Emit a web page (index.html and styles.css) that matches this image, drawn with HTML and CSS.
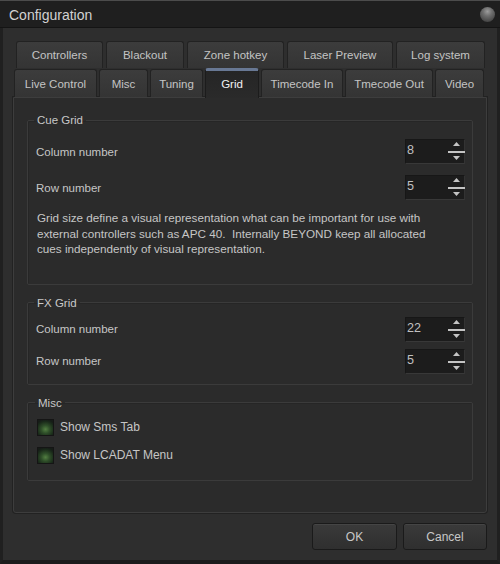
FILE: index.html
```
<!DOCTYPE html>
<html>
<head>
<meta charset="utf-8">
<title>Configuration</title>
<link rel="stylesheet" href="styles.css">
</head>
<body>
<div class="window">
  <div class="titlebar">
    <span class="title">Configuration</span>
    <span class="knob"></span>
  </div>
  <div class="client">
    <div class="tabs">
      <div class="tabrow row1">
        <div class="tab w-controllers">Controllers</div>
        <div class="tab w-blackout">Blackout</div>
        <div class="tab w-zone">Zone hotkey</div>
        <div class="tab w-laser">Laser Preview</div>
        <div class="tab w-log">Log system</div>
      </div>
      <div class="tabrow row2">
        <div class="tab w-live">Live Control</div>
        <div class="tab w-misc">Misc</div>
        <div class="tab w-tuning">Tuning</div>
        <div class="tab w-grid selected">Grid</div>
        <div class="tab w-tcin">Timecode In</div>
        <div class="tab w-tcout">Tmecode Out</div>
        <div class="tab w-video">Video</div>
      </div>
    </div>
    <div class="panel">
      <fieldset class="group cue">
        <legend>Cue Grid</legend>
        <div class="row">
          <span class="label">Column number</span>
          <div class="spin"><span class="val">8</span><svg class="arrows" width="17" height="25" viewBox="0 0 17 25"><path d="M8.5 3 L12 7 L5 7 Z" fill="#c4c4c4"/><rect x="0" y="12" width="17" height="2" fill="#c4c4c4"/><path d="M5 17 L12 17 L8.5 21 Z" fill="#c4c4c4"/></svg></div>
        </div>
        <div class="row">
          <span class="label">Row number</span>
          <div class="spin"><span class="val">5</span><svg class="arrows" width="17" height="25" viewBox="0 0 17 25"><path d="M8.5 3 L12 7 L5 7 Z" fill="#c4c4c4"/><rect x="0" y="12" width="17" height="2" fill="#c4c4c4"/><path d="M5 17 L12 17 L8.5 21 Z" fill="#c4c4c4"/></svg></div>
        </div>
        <p class="desc">Grid size define a visual representation what can be important for use with external controllers such as APC 40.&nbsp; Internally BEYOND keep all allocated cues independently of visual representation.</p>
      </fieldset>
      <fieldset class="group fx">
        <legend>FX Grid</legend>
        <div class="row">
          <span class="label">Column number</span>
          <div class="spin"><span class="val">22</span><svg class="arrows" width="17" height="25" viewBox="0 0 17 25"><path d="M8.5 3 L12 7 L5 7 Z" fill="#c4c4c4"/><rect x="0" y="12" width="17" height="2" fill="#c4c4c4"/><path d="M5 17 L12 17 L8.5 21 Z" fill="#c4c4c4"/></svg></div>
        </div>
        <div class="row">
          <span class="label">Row number</span>
          <div class="spin"><span class="val">5</span><svg class="arrows" width="17" height="25" viewBox="0 0 17 25"><path d="M8.5 3 L12 7 L5 7 Z" fill="#c4c4c4"/><rect x="0" y="12" width="17" height="2" fill="#c4c4c4"/><path d="M5 17 L12 17 L8.5 21 Z" fill="#c4c4c4"/></svg></div>
        </div>
      </fieldset>
      <fieldset class="group misc">
        <legend>Misc</legend>
        <div class="check"><span class="box"></span><span class="clabel">Show Sms Tab</span></div>
        <div class="check"><span class="box"></span><span class="clabel">Show LCADAT Menu</span></div>
      </fieldset>
    </div>
    <div class="buttons">
      <div class="btn ok">OK</div>
      <div class="btn cancel">Cancel</div>
    </div>
  </div>
</div>
</body>
</html>
```
FILE: styles.css
```
* { box-sizing: border-box; }
html, body {
  margin: 0;
  padding: 0;
  background: #2d2d2d;
}
body {
  font-family: "Liberation Sans", Arial, sans-serif;
  font-size: 11.5px;
  color: #c6c6c6;
}
.window {
  width: 500px;
  height: 564px;
  display: flex;
  flex-direction: column;
  background: #2d2d2d;
}
.titlebar {
  height: 28px;
  flex: none;
  display: flex;
  align-items: center;
  justify-content: space-between;
  padding: 0 5px 0 9px;
  background: #1f1f1f;
  border-top: 1px solid #4c4c4c;
  border-bottom: 1px solid #141414;
}
.title {
  font-size: 14px;
  color: #d2d2d2;
  padding-top: 1px;
}
.knob {
  width: 15px;
  height: 15px;
  border-radius: 50%;
  background: radial-gradient(circle at 50% 30%, #9c9c9c 0%, #6e6e6e 35%, #454545 80%, #333 100%);
  margin-top: 1px;
}
.client {
  flex: 1;
  display: flex;
  flex-direction: column;
  padding: 13px 10px 10px 10px;
  border-left: 3px solid #202020;
  border-right: 3px solid #202020;
  border-bottom: 4px solid #1c1c1c;
  background: #2e2e2e;
}
.tabs {
  flex: none;
  display: flex;
  flex-direction: column;
}
.tabrow {
  display: flex;
  align-items: flex-end;
}
.row1 {
  gap: 3px;
  margin-left: 3px;
  height: 28px;
}
.row2 {
  gap: 2px;
  margin-left: 1px;
  height: 28px;
  position: relative;
  z-index: 2;
}
.tab {
  height: 27px;
  display: flex;
  align-items: center;
  justify-content: center;
  border: 1px solid #222;
  border-bottom: none;
  border-radius: 3px 3px 0 0;
  background: linear-gradient(#3c3c3c, #343434);
  color: #c4c4c4;
  white-space: nowrap;
}
.row1 .tab { height: 27px; align-self: flex-start; }
.row2 .tab { height: 28px; }
.tab.selected {
  height: 30px;
  margin-bottom: -1px;
  margin-top: -1px;
  border: 1px solid #1c1c1c;
  border-top: 3px solid #687894;
  border-bottom: none;
  background: linear-gradient(#252525, #2a2a2a);
  color: #f2f2f2;
  padding-bottom: 1px;
}
.w-controllers { width: 87px; }
.w-blackout { width: 78px; }
.w-zone { width: 97px; }
.w-laser { width: 106px; }
.w-log { width: 89px; }
.w-live { width: 83px; }
.w-misc { width: 49px; }
.w-tuning { width: 53px; }
.w-grid { width: 54px; }
.w-tcin { width: 82px; }
.w-tcout { width: 88px; }
.w-video { width: 49px; }

.panel {
  flex: 1;
  display: flex;
  flex-direction: column;
  gap: 11px;
  padding: 15px 13px 0 13px;
  background: #2b2b2b;
  border: 1px solid #3d3d3d;
  border-radius: 0 0 3px 3px;
  box-shadow: 0 0 0 1px #222;
  position: relative;
  z-index: 1;
}
.group {
  margin: 0;
  min-width: 0;
  border: 1px solid #3b3b3b;
  border-radius: 2px;
  padding: 0 7px 0 8px;
  box-shadow: inset 1px 1px 0 #262626;
}
.group legend {
  padding: 0 3px;
  margin-left: -2px;
  line-height: 14px;
  height: 14px;
  color: #c8c8c8;
}
.cue { padding-top: 12px; padding-bottom: 27px; }
.fx { padding-top: 7px; padding-bottom: 10px; }
.misc { padding-top: 9px; padding-bottom: 16px; padding-left: 9px; }
.row {
  display: flex;
  align-items: center;
  justify-content: space-between;
  height: 25px;
}
.cue .row + .row { margin-top: 11px; }
.fx .row + .row { margin-top: 7px; }
.spin {
  width: 60px;
  height: 25px;
  display: flex;
  align-items: center;
  justify-content: space-between;
  background: #1c1c1c;
  border: 1px solid #171717;
  border-bottom-color: #383838;
  border-right-color: #333;
}
.spin .val {
  padding-left: 1px;
  font-size: 12.6px;
  color: #c0c0c0;
  margin-top: -3px;
}
.arrows { display: block; margin-right: -1px; }
.desc {
  margin: 10px 0 0 1px;
  max-width: 412px;
  font-size: 11.7px;
  line-height: 15.5px;
}
.check {
  display: flex;
  align-items: center;
  gap: 6px;
  height: 17px;
}
.check + .check { margin-top: 11px; }
.box {
  width: 17px;
  height: 17px;
  flex: none;
  border: 1px solid #151515;
  background: radial-gradient(ellipse 70% 65% at 50% 62%, #537f42 0%, #2f4f29 40%, #1a2a1a 80%, #161c17 100%);
}
.clabel {
  font-size: 12px;
  color: #c6c6c6;
}
.buttons {
  flex: none;
  display: flex;
  justify-content: flex-end;
  gap: 6px;
  margin-top: 10px;
  height: 27px;
}
.btn {
  height: 27px;
  display: flex;
  align-items: center;
  justify-content: center;
  border: 1px solid #1a1a1a;
  border-radius: 3px;
  background: linear-gradient(#3a3a3a, #2f2f2f);
  box-shadow: inset 0 1px 0 #454545;
  color: #c8c8c8;
  font-size: 12px;
}
.ok { width: 85px; }
.cancel { width: 84px; }
```
